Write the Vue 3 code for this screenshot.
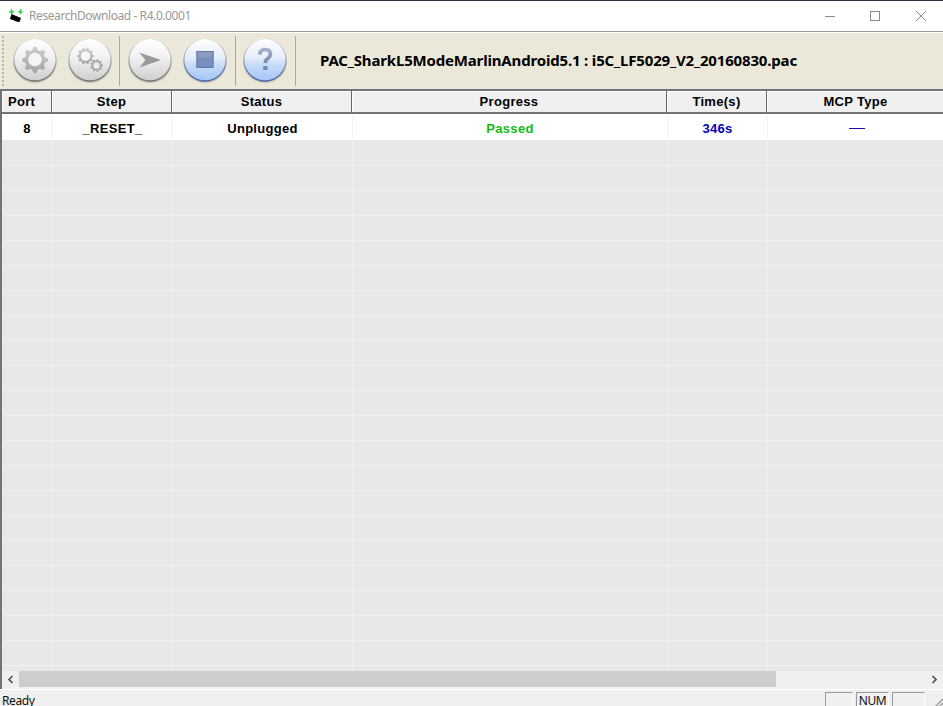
<script setup>
import { ref } from 'vue';

const title = 'ResearchDownload - R4.0.0001';
const packet = 'PAC_SharkL5ModeMarlinAndroid5.1 : i5C_LF5029_V2_20160830.pac';

const columns = ['Port', 'Step', 'Status', 'Progress', 'Time(s)', 'MCP Type'];

const ports = ref([
  { port: '8', step: '_RESET_', status: 'Unplugged', progress: 'Passed', time: '346s' }
]);

const emptyRows = 22;

// teeth of the gear icons: number of teeth, outer radius, root radius
const gear = (cx, cy, teeth, outer, root) => {
  const points = [];
  const step = (Math.PI * 2) / teeth;
  for (let i = 0; i < teeth; i++) {
    const a = i * step;
    [[-0.4, root], [-0.13, outer], [0.13, outer], [0.4, root]].forEach(([t, r]) => {
      points.push(`${(cx + r * Math.cos(a + t * step)).toFixed(2)},${(cy + r * Math.sin(a + t * step)).toFixed(2)}`);
    });
  }
  return points.join(' ');
};

const groups = [
  [{ name: 'settings' }, { name: 'packet' }],
  [{ name: 'start' }, { name: 'stop', active: true }],
  [{ name: 'help', active: true }]
];
</script>

<template>
  <div class="window">
    <header class="titlebar">
      <svg class="app-icon" width="16" height="16" viewBox="0 0 16 16">
        <path d="M3.500 1v4M12.500 1v4" fill="none" stroke="#2fd34c" stroke-width="1.400" />
        <path d="M.8 3h5.400L3.500 6.500zM9.800 3h5.400l-2.700 3.500z" fill="#2fd34c" />
        <path d="M2 10.500l1.500-4.500 9.500 4-1.500 4h-1.500L2 11z" fill="#000" />
      </svg>
      <h1>{{ title }}</h1>
      <svg class="controls" width="120" height="30" viewBox="0 0 120 30" fill="none" stroke="#8b8b8b">
        <path d="M2 15.500h10" />
        <rect x="47.500" y="10.500" width="9" height="9" />
        <path d="M93 10l10 10M103 10l-10 10" />
      </svg>
    </header>

    <div class="toolbar">
      <svg width="0" height="0" class="defs">
        <defs>
          <linearGradient id="grey" x1="0" y1="0" x2="0" y2="1">
            <stop offset="0" stop-color="#fff" />
            <stop offset="0.45" stop-color="#f1f1f1" />
            <stop offset="1" stop-color="#cfcfcf" />
          </linearGradient>
          <linearGradient id="blue" x1="0" y1="0" x2="0" y2="1">
            <stop offset="0" stop-color="#fff" />
            <stop offset="0.45" stop-color="#e6eefa" />
            <stop offset="0.6" stop-color="#cbdcf6" />
            <stop offset="1" stop-color="#a5c7fa" />
          </linearGradient>
          <linearGradient id="greyRim" x1="0" y1="0" x2="0" y2="1">
            <stop offset="0" stop-color="#c8c8c8" />
            <stop offset="1" stop-color="#777" />
          </linearGradient>
          <linearGradient id="blueRim" x1="0" y1="0" x2="0" y2="1">
            <stop offset="0" stop-color="#b9bfd0" />
            <stop offset="1" stop-color="#5069a0" />
          </linearGradient>
          <linearGradient id="gearFill" x1="0" y1="0" x2="0" y2="1">
            <stop offset="0" stop-color="#cdcdcd" />
            <stop offset="1" stop-color="#a6a6a6" />
          </linearGradient>
          <linearGradient id="markFill" x1="0" y1="0" x2="0" y2="1">
            <stop offset="0" stop-color="#a7b0c7" />
            <stop offset="1" stop-color="#7187b7" />
          </linearGradient>
        </defs>
      </svg>
      <span class="gripper"></span>
      <div v-for="(group, g) in groups" :key="g" class="group">
        <button v-for="tool in group" :key="tool.name" type="button" :aria-label="tool.name">
          <svg width="46" height="48" viewBox="0 0 46 48">
            <ellipse cx="23" cy="24.500" rx="22" ry="22" fill="#8c8a80" opacity="0.25" />
            <circle cx="23" cy="23.500" r="21.500" :fill="tool.active ? 'url(#blueRim)' : 'url(#greyRim)'" />
            <circle cx="23" cy="22.700" r="20.600" :fill="tool.active ? 'url(#blue)' : 'url(#grey)'" />
            <template v-if="tool.name === 'settings'">
              <polygon :points="gear(23, 23, 8, 13, 10)" fill="url(#gearFill)" />
              <circle cx="23" cy="22.500" r="6.800" fill="#f5f5f5" />
            </template>
            <template v-else-if="tool.name === 'packet'">
              <polygon :points="gear(18.500, 19, 10, 8.500, 6.700)" fill="url(#gearFill)" />
              <circle cx="18.500" cy="19" r="4.800" fill="#f6f6f6" />
              <polygon :points="gear(29.500, 28.500, 9, 6.500, 5)" fill="#a9a9a9" />
              <circle cx="29.500" cy="28.500" r="3.200" fill="#ececec" />
            </template>
            <path v-else-if="tool.name === 'start'" d="M12 15.500L34 23 12.500 30.500l6-7.500z" fill="#999" />
            <template v-else-if="tool.name === 'stop'">
              <rect x="14.500" y="14" width="17" height="17" fill="#7b8fbe" />
              <path d="M14.500 14h17v5.500l-17 2z" fill="#8c9bc0" />
              <rect x="15" y="14.500" width="16" height="16" fill="none" stroke="#6479ad" />
            </template>
            <g v-else>
              <path d="M18 17.500q0-5 5.200-5t5.200 4.600q0 2.700-2.700 4.400-2.400 1.500-2.400 4.500" fill="none" stroke="url(#markFill)" stroke-width="3.700" />
              <rect x="21.200" y="29" width="4.300" height="4" fill="#7187b7" />
            </g>
          </svg>
        </button>
      </div>
      <p class="packet">{{ packet }}</p>
    </div>

    <main class="list">
      <div class="row head">
        <div v-for="c in columns" :key="c" class="cell"><span>{{ c }}</span></div>
      </div>
      <div v-for="p in ports" :key="p.port" class="row port">
        <div class="cell">{{ p.port }}</div>
        <div class="cell">{{ p.step }}</div>
        <div class="cell">{{ p.status }}</div>
        <div class="cell passed">{{ p.progress }}</div>
        <div class="cell value">{{ p.time }}</div>
        <div class="cell value"><i class="dash"></i></div>
      </div>
      <div class="empty">
        <div v-for="n in emptyRows" :key="n" class="row blank">
          <div v-for="c in columns" :key="c" class="cell"></div>
        </div>
      </div>
      <div class="scrollbar">
        <svg width="17" height="17" viewBox="0 0 17 17"><path d="M10.500 5l-3.500 3.500 3.500 3.500" /></svg>
        <div class="track"><div class="thumb"></div></div>
        <svg width="17" height="17" viewBox="0 0 17 17"><path d="M6.500 5l3.500 3.500-3.500 3.500" /></svg>
      </div>
    </main>

    <footer class="statusbar">
      <span class="ready">Ready</span>
      <span class="pane first"></span>
      <span class="pane num">NUM</span>
      <span class="pane last"></span>
      <svg class="grip" width="14" height="14" viewBox="0 0 14 14"><path d="M4 16L16 4M8 16l8-8" fill="none" stroke="#999" stroke-width="1.300" /></svg>
    </footer>
  </div>
</template>

<style>
body {
  margin: 0;
  overflow: hidden;
}
</style>

<style scoped>
.window {
  display: flex;
  flex-direction: column;
  width: 943px;
  height: 706px;
  background: #f0f0f0;
  font-family: "Noto Sans", "Open Sans", sans-serif;
}

/* Title bar */
.titlebar {
  display: flex;
  align-items: center;
  flex: none;
  box-sizing: border-box;
  height: 32px;
  padding-left: 8px;
  border-top: 1px solid #2d3142;
  border-bottom: 1px solid #999;
  background: #fff;
}

.titlebar h1 {
  flex: 1;
  margin: -1px 0 0 5px;
  font-size: 12px;
  font-weight: 400;
  letter-spacing: -0.42px;
  color: #999;
}

/* Toolbar */
.toolbar {
  display: flex;
  align-items: center;
  flex: none;
  box-sizing: border-box;
  height: 57px;
  border-top: 1px solid #fff;
  background: #ebe8d9;
}

.defs {
  position: absolute;
}

.gripper {
  width: 3px;
  height: 50px;
  margin: 0 4px 0 2px;
  background: repeating-linear-gradient(#b9b7aa 0 2px, transparent 2px 4px);
  clip-path: inset(0 1px 0 0);
}

.group {
  display: flex;
  align-items: center;
  gap: 9px;
  height: 50px;
  padding: 0 7px;
  border-right: 1px solid #aaa89c;
}

.group:nth-of-type(1) {
  padding: 0 6px 0 3px;
}

.group:nth-of-type(3) {
  padding-left: 6px;
}

.group button {
  padding: 0;
  border: 0;
  background: none;
  line-height: 0;
}

.packet {
  margin: -3px 0 0 24px;
  font-size: 15px;
  font-weight: 700;
  letter-spacing: -0.17px;
  white-space: nowrap;
  color: #000;
}

/* Port list */
.list {
  flex: none;
  box-sizing: border-box;
  height: 600px;
  border-top: 2px solid #737373;
  border-left: 2px solid #737373;
  font: 700 13px "Liberation Sans", Arial, sans-serif;
  letter-spacing: 0.3px;
  color: #000;
}

.row {
  display: grid;
  grid-template-columns: 51px 120px 180px 315px 100px 176px;
  box-sizing: border-box;
}

.cell {
  display: flex;
  align-items: center;
  justify-content: center;
  box-sizing: border-box;
  border-right: 1px solid #f3f3f3;
}

.head {
  grid-template-columns: 50px 120px 180px 315px 100px 177px;
  height: 23px;
  border-bottom: 2px solid #737373;
  background: #f0f0f0;
}

.head .cell {
  border-right: 1px solid #666;
  box-shadow: inset 1px 1px #fff;
}

.head .cell:first-child {
  justify-content: flex-start;
  padding-left: 6px;
}

.head .cell:last-child {
  border-right: 0;
}

.port {
  height: 26px;
  padding-top: 2px;
  background: #fff;
}

.empty {
  height: 531px;
  overflow: hidden;
  background: #e8e8e8;
}

.blank {
  height: 25px;
  border-bottom: 1px solid #f0f0f0;
}

.blank:first-child {
  height: 26px;
}

.blank .cell {
  border-right-color: #f0f0f0;
}

.passed {
  color: #12bb12;
}

.value {
  color: #0000c0;
}

.dash {
  width: 16px;
  height: 1px;
  margin-left: 2px;
  background: #1a0ab0;
}

/* Horizontal scrollbar */
.scrollbar {
  display: flex;
  height: 17px;
  background: #f0f0f0;
}

.scrollbar path {
  fill: none;
  stroke: #505050;
  stroke-width: 1.7;
}

.track {
  flex: 1;
}

.thumb {
  width: 757px;
  height: 16px;
  background: #cdcdcd;
}

/* Status bar */
.statusbar {
  display: flex;
  flex: 1;
  min-height: 0;
  border-top: 1px solid #fff;
  font-size: 12px;
  line-height: 10px;
  letter-spacing: -0.4px;
  color: #111;
}

.ready {
  flex: 1;
  padding: 6px 0 0 2px;
}

.pane {
  box-sizing: border-box;
  height: 16px;
  margin: 2px 3px 0 0;
  padding-top: 3px;
  border-top: 1px solid #999;
  border-left: 1px solid #999;
  border-right: 1px solid #fff;
}

.first {
  width: 28px;
}

.num {
  width: 33px;
  text-align: center;
}

.last {
  width: 33px;
}

.grip {
  margin: 3px 0 0 1px;
}
</style>
